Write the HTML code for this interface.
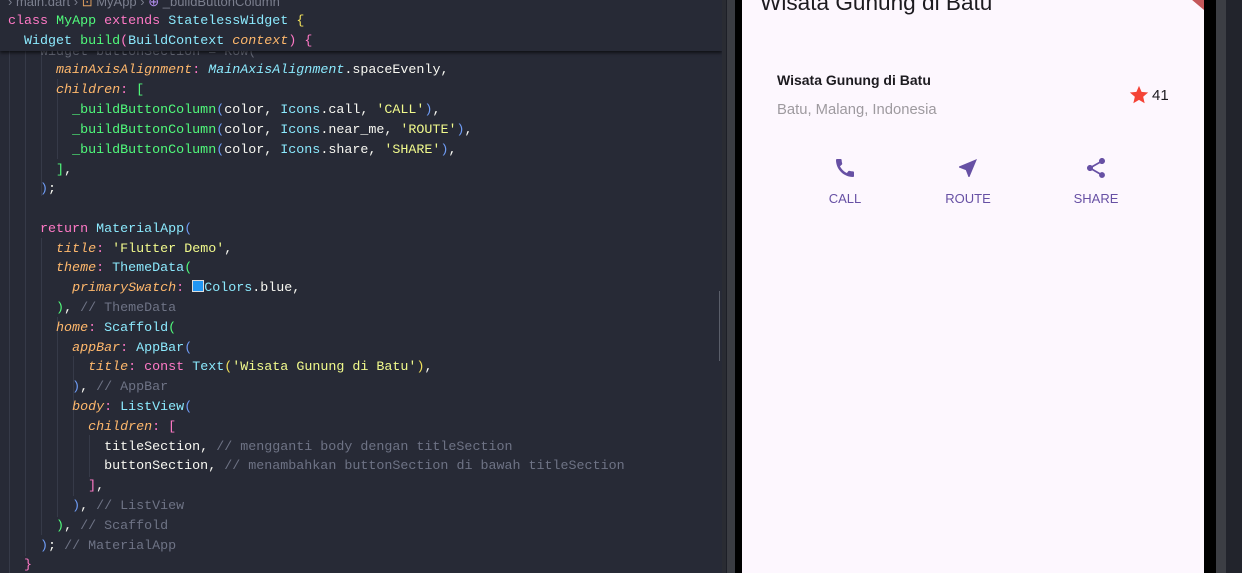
<!DOCTYPE html>
<html><head><meta charset="utf-8"><style>
body{margin:0;width:1242px;height:573px;overflow:hidden;background:#262935;position:relative;font-family:"Liberation Sans",sans-serif}
#ed{position:absolute;left:0;top:0;width:722px;height:573px;background:#272a36;overflow:hidden}
.l{position:absolute;left:8px;height:20px;line-height:20px;font-family:"Liberation Mono",monospace;font-size:13.35px;color:#f8f8f2;white-space:pre}
.k{color:#ff79c6}.g{color:#50fa7b}.c{color:#8be9fd}.p{color:#ffb86c;font-style:italic}.s{color:#f1fa8c}.cm{color:#6e7385}.y{color:#f1e05a}.b{color:#6f9cf5}.f{color:#50fa7b}
.gd{position:absolute;width:1px;background:#363a48}
#hdr{position:absolute;left:0;top:0;width:722px;height:51px;background:#272a36;box-shadow:0 2px 3px rgba(0,0,0,.6);z-index:2}
#phone{position:absolute;left:722px;top:0;width:520px;height:573px;background:#1d1f27}
</style></head><body>
<div id="ed">
<div class="gd" style="left:9px;top:51px;height:522px"></div>
<div class="gd" style="left:25px;top:51px;height:505px"></div>
<div class="gd" style="left:41px;top:51px;height:145px"></div>
<div class="gd" style="left:41px;top:238px;height:297px"></div>
<div class="gd" style="left:57px;top:317px;height:200px"></div>
<div class="gd" style="left:73px;top:356px;height:140px"></div>
<div class="gd" style="left:89px;top:435px;height:42px"></div>
<div class="gd" style="left:57px;top:79px;height:80px"></div>
<div id="hdr">
<div class="l" style="top:-8px;color:#7b7f8e;font-family:'Liberation Sans';font-size:13px">› main.dart › <span style="color:#e0a060">⊡</span> MyApp › <span style="color:#b48ef0">⊕</span> _buildButtonColumn</div>
<div class="l" style="top:12px"><span class="k">class</span> <span class="g">MyApp</span> <span class="k">extends</span> <span class="c">StatelessWidget</span> <span class="y">{</span></div>
<div class="l" style="top:32px">  <span class="c">Widget</span> <span class="g">build</span><span class="k">(</span><span class="c">BuildContext</span> <span class="p">context</span><span class="k">)</span> <span class="k">{</span></div>
</div>
<div class="l" style="top:43px;color:#666a78">    Widget buttonSection = Row(</div>
<div class="l" style="top:61px">      <span class="p">mainAxisAlignment</span><span class="k">:</span> <span class="c" style="font-style:italic">MainAxisAlignment</span>.spaceEvenly,</div>
<div class="l" style="top:81px">      <span class="p">children</span><span class="k">:</span> <span class="f">[</span></div>
<div class="l" style="top:101px">        <span class="g">_buildButtonColumn</span><span class="b">(</span>color, <span class="c">Icons</span>.call, <span class="s">'CALL'</span><span class="b">)</span>,</div>
<div class="l" style="top:121px">        <span class="g">_buildButtonColumn</span><span class="b">(</span>color, <span class="c">Icons</span>.near_me, <span class="s">'ROUTE'</span><span class="b">)</span>,</div>
<div class="l" style="top:141px">        <span class="g">_buildButtonColumn</span><span class="b">(</span>color, <span class="c">Icons</span>.share, <span class="s">'SHARE'</span><span class="b">)</span>,</div>
<div class="l" style="top:161px">      <span class="f">]</span>,</div>
<div class="l" style="top:180px">    <span class="b">)</span>;</div>
<div class="l" style="top:220px">    <span class="k">return</span> <span class="c">MaterialApp</span><span class="b">(</span></div>
<div class="l" style="top:240px">      <span class="p">title</span><span class="k">:</span> <span class="s">'Flutter Demo'</span>,</div>
<div class="l" style="top:259px">      <span class="p">theme</span><span class="k">:</span> <span class="c">ThemeData</span><span class="f">(</span></div>
<div class="l" style="top:279px">        <span class="p">primarySwatch</span><span class="k">:</span> <span style="display:inline-block;width:10px;height:10px;background:#2196f3;border:1px solid #ddd;vertical-align:-1px"></span><span class="c">Colors</span>.blue,</div>
<div class="l" style="top:299px">      <span class="f">)</span>, <span class="cm">// ThemeData</span></div>
<div class="l" style="top:319px">      <span class="p">home</span><span class="k">:</span> <span class="c">Scaffold</span><span class="f">(</span></div>
<div class="l" style="top:339px">        <span class="p">appBar</span><span class="k">:</span> <span class="c">AppBar</span><span class="b">(</span></div>
<div class="l" style="top:358px">          <span class="p">title</span><span class="k">:</span> <span class="k">const</span> <span class="c">Text</span><span class="y">(</span><span class="s">'Wisata Gunung di Batu'</span><span class="y">)</span>,</div>
<div class="l" style="top:378px">        <span class="b">)</span>, <span class="cm">// AppBar</span></div>
<div class="l" style="top:398px">        <span class="p">body</span><span class="k">:</span> <span class="c">ListView</span><span class="b">(</span></div>
<div class="l" style="top:418px">          <span class="p">children</span><span class="k">:</span> <span class="k">[</span></div>
<div class="l" style="top:438px">            titleSection, <span class="cm">// mengganti body dengan titleSection</span></div>
<div class="l" style="top:457px">            buttonSection, <span class="cm">// menambahkan buttonSection di bawah titleSection</span></div>
<div class="l" style="top:477px">          <span class="k">]</span>,</div>
<div class="l" style="top:497px">        <span class="b">)</span>, <span class="cm">// ListView</span></div>
<div class="l" style="top:517px">      <span class="f">)</span>, <span class="cm">// Scaffold</span></div>
<div class="l" style="top:537px">    <span class="b">)</span>; <span class="cm">// MaterialApp</span></div>
<div class="l" style="top:556px">  <span class="k">}</span></div>
<div style="position:absolute;left:719px;top:291px;width:1px;height:70px;background:#5a5e6a"></div>
</div>
<div id="phone">
<div style="position:absolute;left:0;top:0;width:4px;height:573px;background:#2a2c33"></div>
<div style="position:absolute;left:5px;top:0;width:8px;height:573px;background:#3a3c42"></div>
<div style="position:absolute;left:13px;top:0;width:7px;height:573px;background:#000"></div>
<div style="position:absolute;left:20px;top:0;width:462px;height:573px;background:#fdf7fe;overflow:hidden">
 <div style="position:absolute;left:18px;top:-10px;font-size:22.6px;color:#1d1b20">Wisata Gunung di Batu</div>
 <div style="position:absolute;right:-20px;top:-20px;width:40px;height:26px;background:#c4575a;transform:rotate(40deg)"></div>
 <div style="position:absolute;left:35px;top:72px;font-size:14px;font-weight:bold;color:#1d1b20">Wisata Gunung di Batu</div>
 <div style="position:absolute;left:35px;top:102px;font-size:14.8px;color:#9e9a9f">Batu, Malang, Indonesia</div>
 <svg style="position:absolute;left:386px;top:84px" width="22" height="22" viewBox="0 0 24 24"><path fill="#f44336" d="M12 17.27L18.18 21l-1.64-7.03L22 9.24l-7.19-.61L12 2 9.19 8.63 2 9.24l5.46 4.73L5.82 21z"/></svg>
 <div style="position:absolute;left:410px;top:87px;font-size:15px;color:#1d1b20">41</div>
 <svg style="position:absolute;left:91px;top:156px" width="24" height="24" viewBox="0 0 24 24"><path fill="#6750a4" d="M20.01 15.38c-1.23 0-2.420-.2-3.53-.56-.35-.12-.74-.03-1.01.24l-1.57 1.97c-2.83-1.35-5.48-3.9-6.89-6.83l1.95-1.66c.27-.28.35-.67.24-1.02-.37-1.11-.56-2.3-.56-3.53 0-.54-.45-.99-.99-.99H4.19C3.65 3 3 3.24 3 3.99 3 13.28 10.73 21 20.01 21c.71 0 .99-.63.99-1.18v-3.45c0-.54-.45-.99-.99-.99z"/></svg>
 <svg style="position:absolute;left:214px;top:156px" width="24" height="24" viewBox="0 0 24 24"><path fill="#6750a4" d="M21 3L3 10.53v.98l6.84 2.65L12.480 21h.98L21 3z"/></svg>
 <svg style="position:absolute;left:342px;top:156px" width="24" height="24" viewBox="0 0 24 24"><path fill="#6750a4" d="M18 16.08c-.76 0-1.44.3-1.96.77L8.91 12.7c.05-.23.09-.46.09-.7s-.04-.47-.09-.7l7.05-4.11c.54.5 1.25.81 2.04.81 1.66 0 3-1.34 3-3s-1.34-3-3-3-3 1.34-3 3c0 .24.04.47.09.7L8.04 9.81C7.5 9.31 6.79 9 6 9c-1.66 0-3 1.34-3 3s1.34 3 3 3c.79 0 1.5-.31 2.04-.81l7.12 4.16c-.05.21-.08.43-.08.65 0 1.61 1.31 2.92 2.92 2.92s2.92-1.31 2.92-2.92-1.31-2.92-2.92-2.92z"/></svg>
 <div style="position:absolute;left:63px;width:80px;top:191px;text-align:center;font-size:13px;color:#6750a4">CALL</div>
 <div style="position:absolute;left:186px;width:80px;top:191px;text-align:center;font-size:13px;color:#6750a4">ROUTE</div>
 <div style="position:absolute;left:314px;width:80px;top:191px;text-align:center;font-size:13px;color:#6750a4">SHARE</div>
</div>
<div style="position:absolute;left:482px;top:0;width:12px;height:573px;background:#000"></div>
<div style="position:absolute;left:494px;top:0;width:10px;height:573px;background:#3c3e44"></div>
<div style="position:absolute;left:504px;top:0;width:16px;height:573px;background:#22242c"></div>
</div>
</body></html>
